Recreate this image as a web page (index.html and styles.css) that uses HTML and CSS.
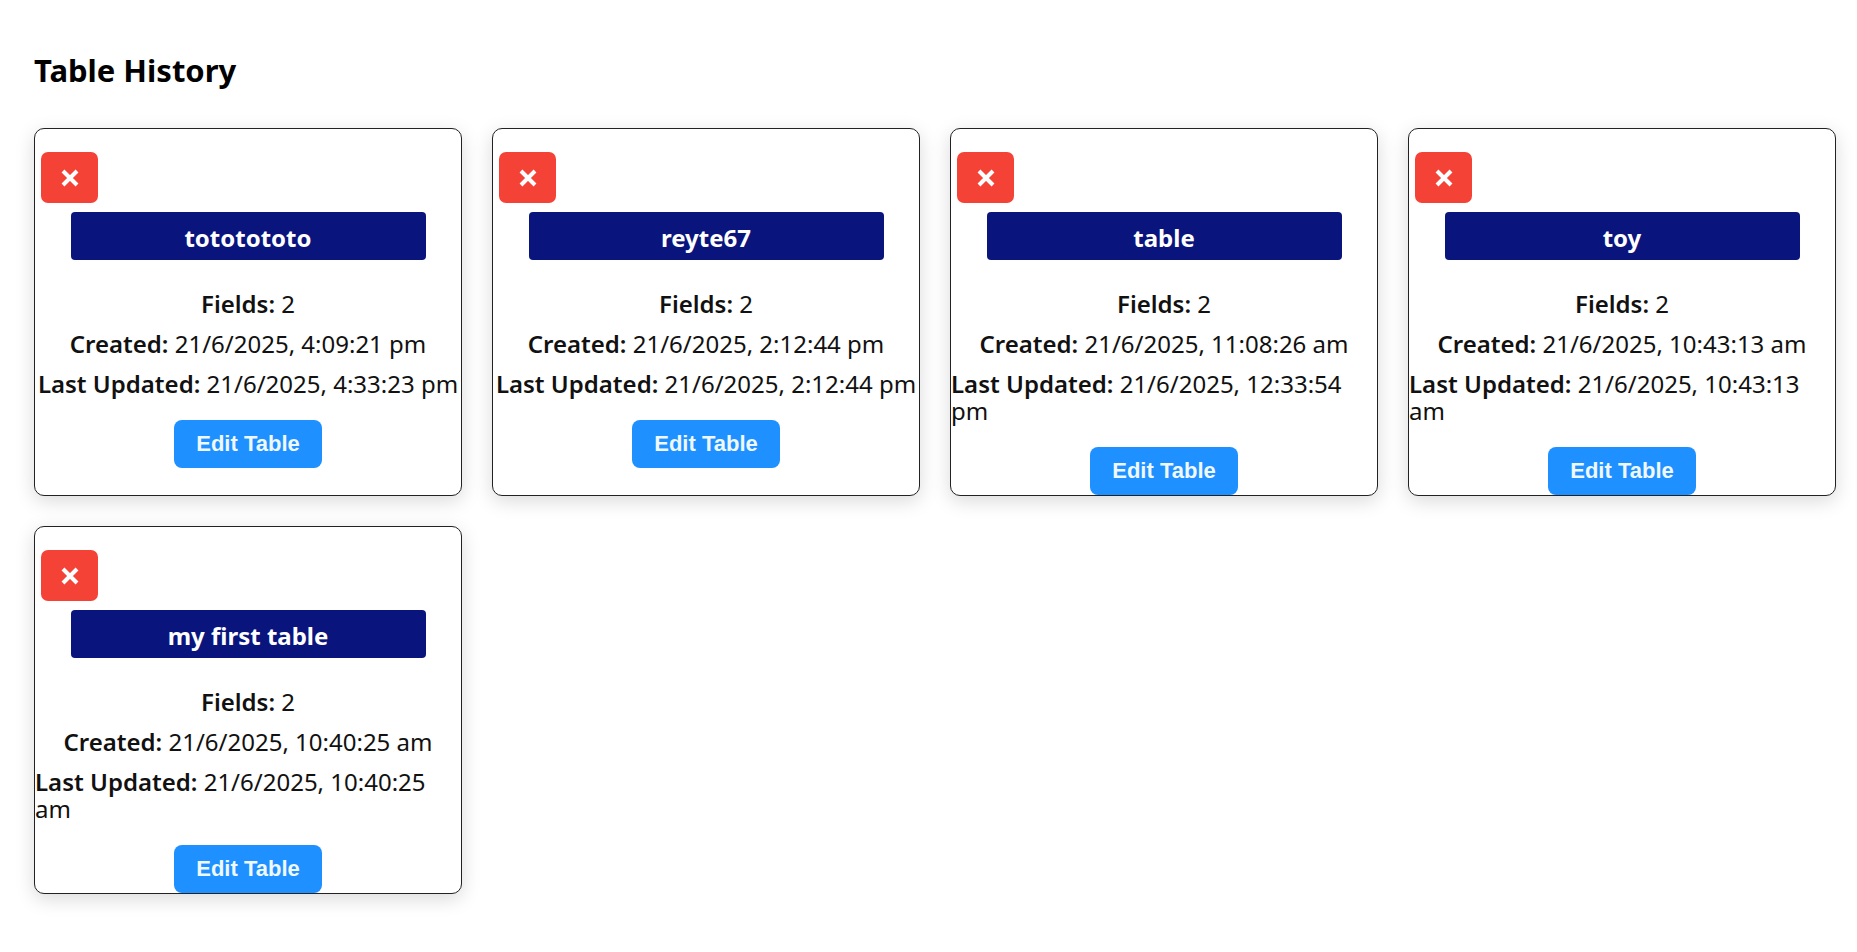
FILE: index.html
```html
<!DOCTYPE html>
<html lang="en">
<head>
<meta charset="utf-8">
<title>Table History</title>
<link rel="stylesheet" href="styles.css">
</head>
<body>
<main class="page">
  <h1 class="page-title">Table History</h1>
  <section class="grid">
    <article class="card">
      <button class="delete" type="button" aria-label="Delete table"><svg viewBox="0 0 18 18" aria-hidden="true"><path d="M2 2L16 16M16 2L2 16"/></svg></button>
      <h2 class="name">tototototo</h2>
      <div class="info">
        <p><strong>Fields:</strong> 2</p>
        <p><strong>Created:</strong> 21/6/2025, 4:09:21 pm</p>
        <p><strong>Last Updated:</strong> 21/6/2025, 4:33:23 pm</p>
      </div>
      <button class="edit" type="button">Edit Table</button>
    </article>
    <article class="card">
      <button class="delete" type="button" aria-label="Delete table"><svg viewBox="0 0 18 18" aria-hidden="true"><path d="M2 2L16 16M16 2L2 16"/></svg></button>
      <h2 class="name">reyte67</h2>
      <div class="info">
        <p><strong>Fields:</strong> 2</p>
        <p><strong>Created:</strong> 21/6/2025, 2:12:44 pm</p>
        <p><strong>Last Updated:</strong> 21/6/2025, 2:12:44 pm</p>
      </div>
      <button class="edit" type="button">Edit Table</button>
    </article>
    <article class="card">
      <button class="delete" type="button" aria-label="Delete table"><svg viewBox="0 0 18 18" aria-hidden="true"><path d="M2 2L16 16M16 2L2 16"/></svg></button>
      <h2 class="name">table</h2>
      <div class="info">
        <p><strong>Fields:</strong> 2</p>
        <p><strong>Created:</strong> 21/6/2025, 11:08:26 am</p>
        <p><strong>Last Updated:</strong> 21/6/2025, 12:33:54 pm</p>
      </div>
      <button class="edit" type="button">Edit Table</button>
    </article>
    <article class="card">
      <button class="delete" type="button" aria-label="Delete table"><svg viewBox="0 0 18 18" aria-hidden="true"><path d="M2 2L16 16M16 2L2 16"/></svg></button>
      <h2 class="name">toy</h2>
      <div class="info">
        <p><strong>Fields:</strong> 2</p>
        <p><strong>Created:</strong> 21/6/2025, 10:43:13 am</p>
        <p><strong>Last Updated:</strong> 21/6/2025, 10:43:13 am</p>
      </div>
      <button class="edit" type="button">Edit Table</button>
    </article>
    <article class="card">
      <button class="delete" type="button" aria-label="Delete table"><svg viewBox="0 0 18 18" aria-hidden="true"><path d="M2 2L16 16M16 2L2 16"/></svg></button>
      <h2 class="name">my first table</h2>
      <div class="info">
        <p><strong>Fields:</strong> 2</p>
        <p><strong>Created:</strong> 21/6/2025, 10:40:25 am</p>
        <p><strong>Last Updated:</strong> 21/6/2025, 10:40:25 am</p>
      </div>
      <button class="edit" type="button">Edit Table</button>
    </article>
  </section>
</main>
</body>
</html>
```
FILE: styles.css
```css
* {
  box-sizing: border-box;
}

body {
  margin: 0;
  background: #fff;
  color: #111;
  font-family: "Noto Sans", sans-serif;
}

.page {
  padding: 48px 21px 48px 34px;
}

.page-title {
  margin: 0 0 36px;
  color: #000;
  font-size: 31px;
  line-height: 44px;
}

.grid {
  display: grid;
  grid-template-columns: repeat(auto-fill, minmax(400px, 1fr));
  gap: 30px;
}

.card {
  display: flex;
  flex-direction: column;
  align-items: center;
  padding-top: 23px;
  background: #fff;
  border: 1px solid #222;
  border-radius: 10px;
  box-shadow: 0 5px 19px rgba(0, 0, 0, 0.15);
}

.delete {
  display: flex;
  align-items: center;
  justify-content: center;
  align-self: flex-start;
  width: 57px;
  height: 51px;
  margin: 0 0 9px 6px;
  padding: 0;
  background: #f44336;
  border: 0;
  border-radius: 7px;
}

.delete svg {
  width: 18px;
  height: 18px;
  fill: none;
  stroke: #fff;
  stroke-width: 4;
}

.name {
  width: 355px;
  max-width: 100%;
  margin: 0 0 30px;
  padding: 8px 0 4px;
  background: #0a147d;
  border-radius: 4px;
  color: #fff;
  font-size: 24px;
  line-height: 36px;
  text-align: center;
}

.info {
  display: flex;
  flex-direction: column;
  align-items: center;
  gap: 13px;
  margin-bottom: 23px;
  font-size: 24px;
  line-height: 27px;
}

.info p {
  margin: 0;
}

.info strong {
  font-weight: 600;
}

.edit {
  height: 48px;
  padding: 0 22px;
  background: #1e90ff;
  border: 0;
  border-radius: 8px;
  color: #f0f8ff;
  font: bold 22px "Liberation Sans", Arial, sans-serif;
}
```
